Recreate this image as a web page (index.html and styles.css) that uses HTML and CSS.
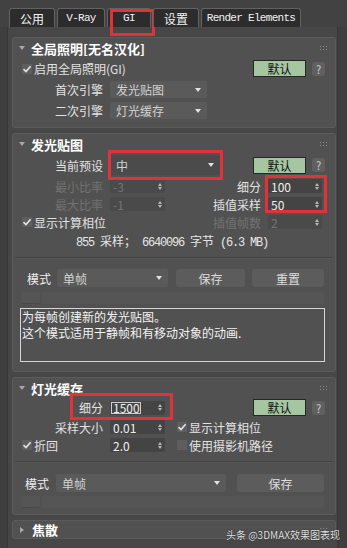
FILE: index.html
```html
<!DOCTYPE html>
<html lang="zh-CN">
<head>
    <meta charset="UTF-8">
    <title>V-Ray 间接照明</title>
    <link rel="stylesheet" href="styles.css">
</head>
<body>

    <div class="tabs">
        <div class="tab">公用</div>
        <div class="tab mono">V-Ray</div>
        <div class="tab mono on">GI</div>
        <div class="tab">设置</div>
        <div class="tab mono wide">Render Elements</div>
    </div>

    <div class="panel">

        <!-- 全局照明 -->
        <div class="roll r1">
            <div class="head"><i class="tri"></i>全局照明[无名汉化]<svg class="grip" width="7" height="4"><rect x="0" y="0" width="1" height="1"/><rect x="3" y="0" width="1" height="1"/><rect x="6" y="0" width="1" height="1"/><rect x="0" y="3" width="1" height="1"/><rect x="3" y="3" width="1" height="1"/><rect x="6" y="3" width="1" height="1"/></svg></div>
            <div class="row first">
                <span class="chk"><i class="box"><svg width="10" height="10"><path d="M1.5 5.2 L4 7.6 L8.6 2.2"/></svg></i>启用全局照明(GI)</span>
                <span class="def">默认</span><span class="help">?</span>
            </div>
            <div class="row">
                <span class="lab">首次引擎</span>
                <span class="drop w97">发光贴图<i class="caret"></i></span>
            </div>
            <div class="row">
                <span class="lab">二次引擎</span>
                <span class="drop w97">灯光缓存<i class="caret"></i></span>
            </div>
        </div>

        <!-- 发光贴图 -->
        <div class="roll r2">
            <div class="head"><i class="tri"></i>发光贴图<svg class="grip" width="7" height="4"><rect x="0" y="0" width="1" height="1"/><rect x="3" y="0" width="1" height="1"/><rect x="6" y="0" width="1" height="1"/><rect x="0" y="3" width="1" height="1"/><rect x="3" y="3" width="1" height="1"/><rect x="6" y="3" width="1" height="1"/></svg></div>
            <div class="row preset">
                <span class="lab">当前预设</span>
                <span class="drop w110">中<i class="caret"></i></span>
                <span class="def">默认</span><span class="help">?</span>
            </div>
            <div class="grid">
                <span class="lab off">最小比率</span>
                <span class="spin off">-3<i class="arr"></i></span>
                <span class="lab2">细分</span>
                <span class="spin">100<i class="arr"></i></span>

                <span class="lab off">最大比率</span>
                <span class="spin off">-1<i class="arr"></i></span>
                <span class="lab2">插值采样</span>
                <span class="spin">50<i class="arr"></i></span>

                <span class="chk span2"><i class="box"><svg width="10" height="10"><path d="M1.5 5.2 L4 7.6 L8.6 2.2"/></svg></i>显示计算相位</span>
                <span class="lab2 off">插值帧数</span>
                <span class="spin off">2<i class="arr"></i></span>
            </div>
            <div class="info">855 <span class="cj">采样；</span> 6640096 <span class="cj">字节</span> (6.3 MB)</div>
            <div class="sep"></div>
            <div class="mode m2">
                <span class="mlab">模式</span>
                <span class="drop w111">单帧<i class="caret"></i></span>
                <span class="btn save">保存</span>
                <span class="btn reset">重置</span>
            </div>
            <div class="bar"><span class="sq"></span><span class="long"></span></div>
            <div class="note">
                <p>为每帧创建新的发光贴图。</p>
                <p>这个模式适用于静帧和有移动对象的动画.</p>
            </div>
            <div class="mark ma"></div>
            <div class="mark mb"></div>
        </div>

        <!-- 灯光缓存 -->
        <div class="roll r3">
            <div class="head"><i class="tri"></i>灯光缓存<svg class="grip" width="7" height="4"><rect x="0" y="0" width="1" height="1"/><rect x="3" y="0" width="1" height="1"/><rect x="6" y="0" width="1" height="1"/><rect x="0" y="3" width="1" height="1"/><rect x="3" y="3" width="1" height="1"/><rect x="6" y="3" width="1" height="1"/></svg></div>
            <div class="row first3">
                <span class="lab">细分</span>
                <span class="spin w55"><span class="val">1500<i class="cur"></i></span><i class="arr"></i></span>
                <span class="def">默认</span><span class="help">?</span>
            </div>
            <div class="row sub r3a">
                <span class="lab">采样大小</span>
                <span class="spin w55">0.01<i class="arr"></i></span>
                <span class="chk side"><i class="box"><svg width="10" height="10"><path d="M1.5 5.2 L4 7.6 L8.6 2.2"/></svg></i>显示计算相位</span>
            </div>
            <div class="row sub r3b">
                <span class="chk lead"><i class="box"><svg width="10" height="10"><path d="M1.5 5.2 L4 7.6 L8.6 2.2"/></svg></i>折回</span>
                <span class="spin w55">2.0<i class="arr"></i></span>
                <span class="chk side"><i class="box"></i>使用摄影机路径</span>
            </div>
            <div class="sep s3"></div>
            <div class="mode m3">
                <span class="mlab">模式</span>
                <span class="drop w170">单帧<i class="caret"></i></span>
                <span class="btn save3">保存</span>
            </div>
            <div class="bar b3"><span class="sq"></span><span class="long"></span></div>
            <div class="mark mc"></div>
        </div>

        <!-- 焦散 -->
        <div class="roll r4">
            <div class="head"><i class="tri shut"></i>焦散<svg class="grip" width="7" height="4"><rect x="0" y="0" width="1" height="1"/><rect x="3" y="0" width="1" height="1"/><rect x="6" y="0" width="1" height="1"/><rect x="0" y="3" width="1" height="1"/><rect x="3" y="3" width="1" height="1"/><rect x="6" y="3" width="1" height="1"/></svg></div>
        </div>

    </div>

    <div class="stamp">头条 @3DMAX效果图表现</div>

</body>
</html>
```

FILE: styles.css
```css
* {
    margin: 0;
    padding: 0;
    box-sizing: border-box;
}

body {
    position: relative;
    width: 347px;
    height: 548px;
    overflow: hidden;
    background: #3e3e3e;
    color: #e2e2e2;
    font: 12px "Noto Sans CJK SC", sans-serif;
}

i {
    font-style: normal;
}

/* tabs */
.tabs {
    display: flex;
    gap: 2px;
    height: 27px;
    padding: 8px 0 0 9px;
    background: #424242;
}

.tab {
    position: relative;
    width: 46px;
    height: 19px;
    display: flex;
    align-items: center;
    justify-content: center;
    background: #2c2c2c;
    border: 1px solid #626262;
    border-bottom: 0;
    border-radius: 3px 3px 0 0;
    color: #f2f2f2;
}

.tab:nth-child(2) {
    width: 48px;
}

.tab.on {
    width: 44px;
}

.tab.wide {
    width: 100px;
}

.mono {
    font-family: "Liberation Mono", monospace;
    font-size: 11px;
    letter-spacing: -0.7px;
}

.tab.on::after {
    content: "";
    position: absolute;
    left: 2px;
    top: 0;
    width: 39px;
    height: 21px;
    border: 3px solid #e3313a;
}

/* panel + rollouts */
.panel {
    display: flex;
    flex-direction: column;
    gap: 5px;
    width: 331px;
    height: 521px;
    margin-left: 7px;
    padding: 10px 0 0 4px;
    background: #474747;
    border-left: 1px solid #363636;
    border-right: 1px solid #363636;
}

.roll {
    position: relative;
    width: 324px;
    background: #515151;
    border: 1px solid #5b5b5b;
    border-radius: 3px;
}

.head {
    display: flex;
    align-items: center;
    height: 20px;
    padding-left: 6px;
    color: #fff;
    font-size: 13px;
    font-weight: bold;
}

.tri {
    margin-right: 6px;
    border-left: 3px solid transparent;
    border-right: 3px solid transparent;
    border-top: 4px solid #a8a8a8;
}

.tri.shut {
    border-top: 3px solid transparent;
    border-bottom: 3px solid transparent;
    border-left: 4px solid #a8a8a8;
    border-right: 0;
    margin: 0 8px 0 1px;
}

.grip {
    margin-left: auto;
    margin-right: 8px;
    fill: #8c8c8c;
}

.row {
    display: flex;
    align-items: center;
    height: 17px;
    padding-right: 10px;
}

.r1 {
    padding-bottom: 8px;
}

.r1 .row {
    margin-top: 4px;
}

.r1 .row.first {
    margin-top: 2px;
    padding-left: 9px;
}

.lab {
    width: 90px;
    margin-right: 7px;
    text-align: right;
    flex-shrink: 0;
}

.off {
    color: #727272;
}

.chk {
    display: flex;
    align-items: center;
}

.box {
    display: inline-flex;
    width: 10px;
    height: 10px;
    margin-right: 2px;
    background: #5e5e5e;
}

.box path {
    fill: none;
    stroke: #e4e4e4;
    stroke-width: 1.6;
}

.def {
    display: flex;
    align-items: center;
    justify-content: center;
    width: 53px;
    height: 17px;
    margin-left: auto;
    background: #a5c6a1;
    border: 1px solid #262626;
    color: #111;
}

.help {
    display: flex;
    align-items: center;
    justify-content: center;
    width: 13px;
    height: 14px;
    margin-left: 6px;
    background: #606060;
    border-radius: 3px;
    color: #cfcfcf;
    font-size: 11px;
}

/* controls */
.drop {
    display: flex;
    align-items: center;
    height: 17px;
    padding: 0 6px;
    background: #5a5a5a;
    border-radius: 2px;
    color: #d2d2d2;
    flex-shrink: 0;
}

.caret {
    margin-left: auto;
    border-left: 3px solid transparent;
    border-right: 3px solid transparent;
    border-top: 4px solid #e2e2e2;
}

.w97 {
    width: 97px;
}

.w110 {
    width: 110px;
    height: 20px;
    background: #4b4b4b;
    margin-right: 33px;
}

.w111 {
    width: 111px;
    height: 18px;
}

.w170 {
    width: 170px;
    height: 18px;
}

.spin {
    display: flex;
    align-items: center;
    height: 14px;
    padding: 0 3px 0 3px;
    background: #444;
    border-radius: 2px;
    color: #efefef;
}

.spin.off {
    color: #757575;
    background: #4a4a4a;
}

.w55 {
    width: 55px;
    flex-shrink: 0;
}

.arr {
    display: flex;
    flex-direction: column;
    gap: 1px;
    margin-left: auto;
}

.arr::before,
.arr::after {
    content: "";
    border-left: 2.5px solid transparent;
    border-right: 2.5px solid transparent;
}

.arr::before {
    border-bottom: 3px solid #b8b8b8;
}

.arr::after {
    border-top: 3px solid #b8b8b8;
}

.val {
    display: flex;
    align-items: center;
    width: 30px;
    height: 12px;
    margin-left: -2px;
    padding-left: 1px;
    border: 1px solid #cfcfcf;
    line-height: 10px;
}

.cur {
    width: 1px;
    height: 9px;
    margin-left: 1px;
    background: #ddd;
}

.btn {
    display: flex;
    align-items: center;
    justify-content: center;
    height: 18px;
    background: #5c5c5c;
    border-radius: 3px;
    color: #dcdcdc;
}

/* 发光贴图 */
.r2 {
    padding-bottom: 9px;
}

.preset {
    height: 20px;
    margin-top: 1px;
}

.grid {
    display: grid;
    grid-template-columns: 90px 55px 1fr 54px;
    grid-auto-rows: 18px;
    column-gap: 7px;
    align-items: center;
    margin-top: 2px;
    padding-right: 13px;
}

.grid .lab {
    margin-right: 0;
}

.lab2 {
    text-align: right;
}

.span2 {
    grid-column: 1 / 3;
    padding-left: 9px;
}

.info {
    height: 20px;
    padding-left: 63px;
    line-height: 20px;
    white-space: pre;
    font-family: "Liberation Mono", "Noto Sans CJK SC", monospace;
    letter-spacing: -1.2px;
    color: #e6e6e6;
}

.cj {
    font-family: "Noto Sans CJK SC", sans-serif;
    letter-spacing: 0;
}

.sep {
    height: 2px;
    margin: 6px 2px 0;
    border-top: 1px solid #434343;
    border-bottom: 1px solid #575757;
}

.mode {
    display: flex;
    align-items: center;
    height: 18px;
    margin-top: 10px;
}

.mlab {
    width: 24px;
    margin-right: 6px;
    flex-shrink: 0;
    color: #eee;
}

.m2 {
    padding-left: 14px;
}

.save {
    width: 69px;
    margin-left: 8px;
}

.reset {
    width: 72px;
    margin-left: 7px;
}

.bar {
    display: flex;
    gap: 2px;
    height: 12px;
    margin-top: 5px;
    padding-left: 8px;
}

.sq {
    width: 19px;
    background: #555;
    border-radius: 2px;
    border-bottom: 1px solid #4a4a4a;
}

.long {
    width: 282px;
    background: #555;
    border-radius: 2px;
}

.note {
    width: 305px;
    height: 54px;
    margin: 4px 0 0 7px;
    padding: 0 1px;
    border: 1px solid #d6d6d6;
    line-height: 16px;
    color: #f2f2f2;
}

/* 灯光缓存 */
.r3 {
    padding-bottom: 6px;
}

.first3 {
    margin-top: 1px;
}

.sub {
    height: 16px;
}

.r3a {
    margin-top: 3px;
}

.r3b {
    margin-top: 2px;
}

.side {
    margin-left: 12px;
}

.lead {
    width: 97px;
    padding-left: 9px;
    flex-shrink: 0;
}

.s3 {
    margin-top: 8px;
}

.m3 {
    margin-top: 11px;
    padding-left: 12px;
}

.m3 .mlab {
    margin-right: 7px;
}

.save3 {
    width: 87px;
    margin-left: 11px;
}

.b3 {
    margin-top: 4px;
}

/* 焦散 */
.r4 .head {
    height: 17px;
}

/* red marks over the controls */
.mark {
    position: absolute;
    border: 3px solid #e3313a;
}

.ma {
    left: 95px;
    top: 16px;
    width: 115px;
    height: 30px;
}

.mb {
    left: 252px;
    top: 41px;
    width: 62px;
    height: 38px;
}

.mc {
    left: 57px;
    top: 15px;
    width: 103px;
    height: 27px;
}

.stamp {
    position: absolute;
    right: 7px;
    bottom: 6px;
    color: rgba(255, 255, 255, .9);
    font-size: 10px;
    text-shadow: 0 0 1px #000;
}
```
